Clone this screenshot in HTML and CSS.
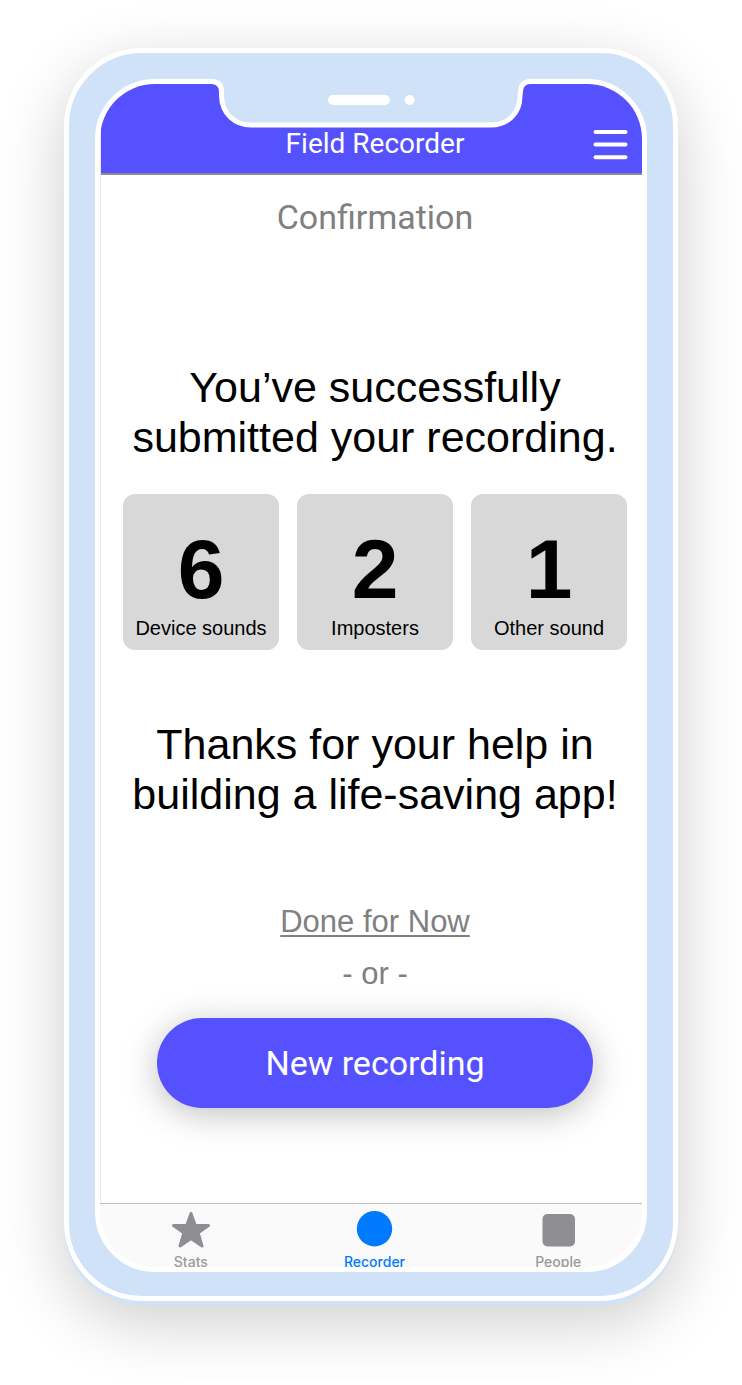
FILE: index.html
```html
<!DOCTYPE html>
<html lang="en">
<head>
<meta charset="utf-8">
<meta name="viewport" content="width=device-width, initial-scale=1">
<title>Field Recorder</title>
<link rel="stylesheet" href="styles.css">
</head>
<body>
<div class="phone">
  <div class="frame">
    <div class="screen">
      <div class="app">
        <header class="topbar">
          <h1 class="topbar-title">Field Recorder</h1>
          <button class="menu" type="button" aria-label="Menu">
            <svg width="36" height="30" viewBox="0 0 36 30" fill="none" stroke="#fff" stroke-width="4" stroke-linecap="round"><path d="M3.500 2H33.500M3.500 14.600H33.500M3.500 27.300H33.500"/></svg>
          </button>
        </header>
        <main class="content">
          <h2 class="step">Confirmation</h2>
          <p class="message">You’ve successfully<br>submitted your recording.</p>
          <div class="cards">
            <div class="card"><strong class="count">6</strong><span class="label">Device sounds</span></div>
            <div class="card"><strong class="count">2</strong><span class="label">Imposters</span></div>
            <div class="card"><strong class="count">1</strong><span class="label">Other sound</span></div>
          </div>
          <p class="message">Thanks for your help in<br>building a life-saving app!</p>
          <div class="actions">
            <a class="done" href="#done">Done for Now</a>
            <span class="or">- or -</span>
            <button class="primary" type="button">New recording</button>
          </div>
        </main>
        <nav class="tabs">
          <a class="tab" href="#stats">
            <svg width="40" height="38" viewBox="0 0 40 38" fill="#8e8e93" stroke="#8e8e93" stroke-width="3" stroke-linejoin="round"><path d="M20 2.500L24.300 14.500H37.500L27.200 21.800L31 35L20 27.600L9 35L12.800 21.800L2.500 14.500H15.700Z"/></svg>
            <span>Stats</span>
          </a>
          <a class="tab active" href="#recorder">
            <svg width="40" height="38" viewBox="0 0 40 38" fill="#007aff"><circle cx="20.500" cy="17.700" r="17.700"/></svg>
            <span>Recorder</span>
          </a>
          <a class="tab" href="#people">
            <svg width="40" height="38" viewBox="0 0 40 38" fill="#8e8e93"><rect x="4.500" y="3" width="32.500" height="32.500" rx="5"/></svg>
            <span>People</span>
          </a>
        </nav>
      </div>
    </div>
    <svg class="notch" width="322" height="50" viewBox="210 79 322 50">
      <path d="M212 79V81.500Q221.500 82 221.500 92V96C222 114 235 125 251 125H491C507 125 520 114 520 96L520.500 91Q521 82 530 81.500V79Z" fill="#d0e2f8"/>
      <path d="M210 81.500H212Q221.500 82 221.500 92V96C222 114 235 125 251 125H491C507 125 520 114 520 96L520.500 91Q521 82 530 81.500H532" fill="none" stroke="#fff" stroke-width="5"/>
      <rect x="328" y="95" width="62" height="10" rx="5" fill="#fff"/>
      <circle cx="409.700" cy="100" r="5" fill="#fff"/>
    </svg>
  </div>
</div>
</body>
</html>
```
FILE: styles.css
```css
* { box-sizing: border-box; }

body {
  margin: 0;
  padding: 48px 64px 80px;
  background: #fff;
  font-family: "Liberation Sans", Arial, sans-serif;
  color: #000;
}

h1, h2, p { margin: 0; font-weight: 400; }

.phone {
  padding: 26px 26px 24px;
  border: 5px solid #fff;
  border-radius: 78px;
  background: #d0e2f8;
  box-shadow: 0 4px 0 #d0e2f8, 0 20px 66px rgba(0, 0, 0, 0.2);
}

.frame {
  position: relative;
  border: 5px solid #fff;
  border-radius: 60px;
  background: #fff;
}

.screen {
  overflow: hidden;
  border-radius: 55px;
}

.notch {
  position: absolute;
  top: -5px;
  left: 0;
  right: 0;
  margin: 0 auto;
}

/* The app canvas is slightly wider than the visible screen. */
.app {
  margin-right: -7px;
  border-left: 1px solid #e0eafa;
}

.topbar {
  display: grid;
  grid-template-columns: 57px 1fr 57px;
  align-items: end;
  height: 91px;
  padding-bottom: 13px;
  border-bottom: 2px solid #8c8c93;
  background: #5651ff;
  color: #fff;
}

.topbar-title {
  grid-column: 2;
  font: 400 28px/32px Roboto, sans-serif;
  text-align: center;
}

.menu {
  display: flex;
  width: 36px;
  padding: 0;
  border: 0;
  background: none;
}

.content {
  display: flex;
  flex-direction: column;
  padding: 22px 22px 95px;
  text-align: center;
}

.step {
  font: 400 34px/40px Roboto, sans-serif;
  color: #808080;
}

.message {
  margin-top: 125px;
  font-size: 43px;
  line-height: 50px;
}

.cards {
  display: grid;
  grid-template-columns: repeat(3, 1fr);
  gap: 18px;
  margin-top: 32px;
}

.card {
  display: flex;
  flex-direction: column;
  align-items: center;
  padding: 28px 0 10px;
  border-radius: 12px;
  background: #d8d8d8;
}

.count {
  font-size: 84px;
  line-height: 94px;
}

.label {
  font-size: 20px;
  line-height: 24px;
}

.cards + .message { margin-top: 69px; }

.actions {
  display: flex;
  flex-direction: column;
  align-items: center;
  margin-top: 85px;
  font-size: 31px;
  color: #808080;
}

.done {
  color: inherit;
  line-height: 36px;
  text-underline-offset: 3px;
  text-decoration-thickness: 2px;
}

.or {
  margin-top: 16px;
  line-height: 36px;
}

.primary {
  align-self: stretch;
  height: 90px;
  margin: 26px 34px 0;
  border: 0;
  border-radius: 45px;
  background: #5651ff;
  box-shadow: 0 6px 34px rgba(0, 0, 0, 0.25);
  color: #fff;
  font: 400 34px/40px Roboto, sans-serif;
}

.tabs {
  display: grid;
  grid-template-columns: repeat(3, 1fr);
  height: 64px;
  margin: 0 -1px 0 -2px;
  padding-top: 7px;
  overflow: hidden;
  border-top: 1px solid #c2c2c6;
  background: #fafafa;
}

.tab {
  display: flex;
  flex-direction: column;
  align-items: center;
  gap: 4px;
  color: #999;
  font: 500 14px/18px Inter, sans-serif;
  text-decoration: none;
}

.tab.active { color: #007aff; }
```
